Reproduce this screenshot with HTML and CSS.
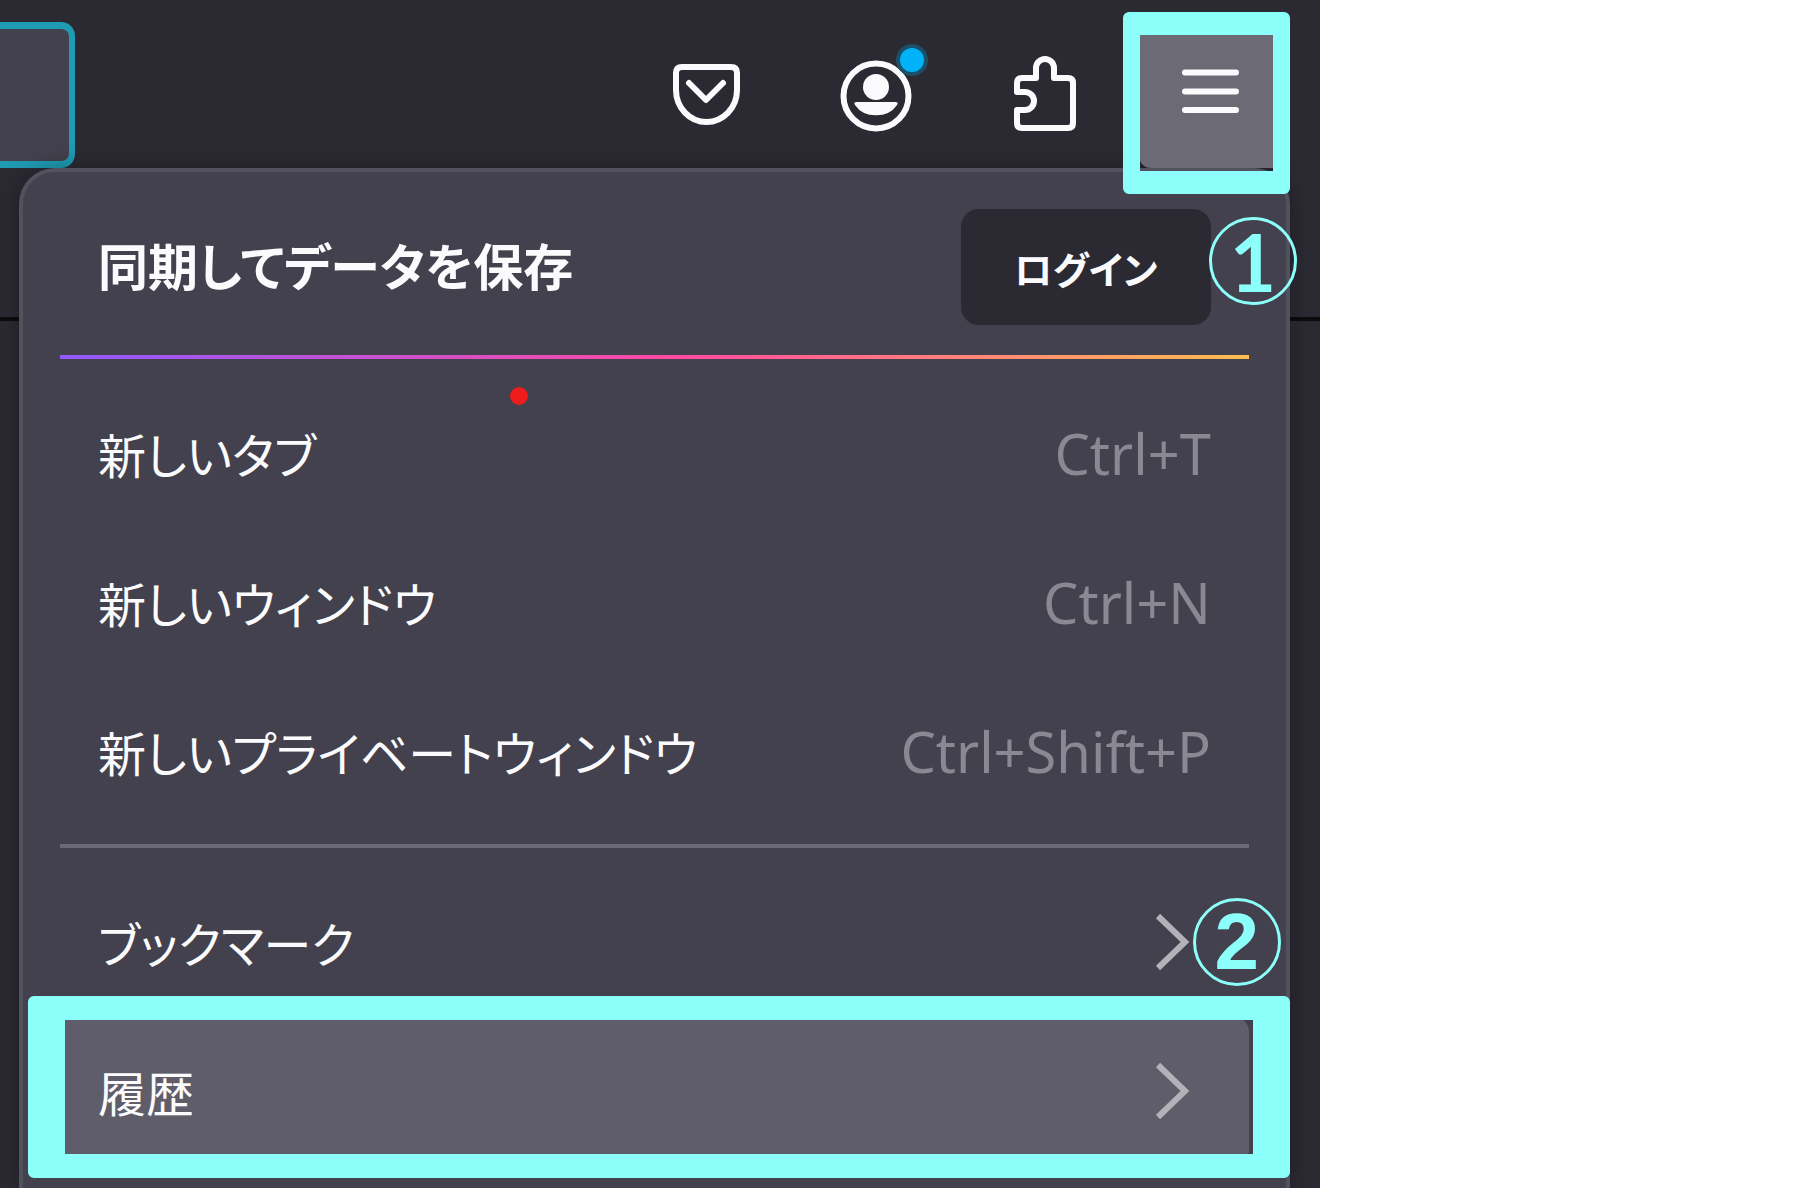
FILE: index.html
```html
<!DOCTYPE html>
<html lang="ja">
<head>
  <meta charset="UTF-8">
  <meta name="viewport" content="width=device-width, initial-scale=1">
  <title>Firefox メニュー</title>
  <link rel="stylesheet" href="styles.css">
</head>
<body>
  <div class="browser">
    <header class="toolbar">
      <input class="urlbar" type="text" aria-label="URL">
      <div class="tools">
        <button class="tool" aria-label="Pocket">
          <svg viewBox="0 0 80 80">
            <path d="M15 12h49q6 0 6 6v17a30.5 32 0 0 1-61 0V18q0-6 6-6z"/>
            <path d="M22 28l17 17 17-17"/>
          </svg>
        </button>
        <button class="tool" aria-label="アカウント">
          <svg viewBox="0 0 80 80">
            <circle cx="41" cy="41" r="32.5"/>
            <circle class="solid" cx="41" cy="32" r="13"/>
            <path class="solid" d="M22 47h38q4 0 2 3a24 20 0 0 1-42 0q-2-3 2-3z"/>
            <circle class="dot-glow" cx="77" cy="5" r="16"/>
            <circle class="dot" cx="77" cy="5" r="12"/>
          </svg>
        </button>
        <button class="tool" aria-label="拡張機能">
          <svg viewBox="0 0 80 80">
            <path d="M33 23V13a9 9 0 0 1 18 0v10h14q5 0 5 5v40q0 5-5 5H19q-5 0-5-5V55h8a9 9 0 0 0 0-18h-8v-9q0-5 5-5z"/>
          </svg>
        </button>
        <button class="tool open" aria-label="メニュー">
          <svg viewBox="0 0 80 80">
            <path d="M14 17.500h51M14 36.500h51M14 55h51"/>
          </svg>
          <span class="frame frame-tool"></span>
        </button>
      </div>
    </header>
    <div class="bookmarks-bar"></div>

    <nav class="panel">
      <div class="sync">
        <h2>同期してデータを保存</h2>
        <button class="login">ログイン</button>
      </div>
      <hr class="rainbow">
      <button class="item">新しいタブ <kbd>Ctrl+T</kbd></button>
      <button class="item">新しいウィンドウ <kbd>Ctrl+N</kbd></button>
      <button class="item">新しいプライベートウィンドウ <kbd>Ctrl+Shift+P</kbd></button>
      <hr>
      <button class="item">ブックマーク
        <svg class="chevron" viewBox="0 0 36 60"><path d="M3 4l27 26L3 56"/></svg>
      </button>
      <button class="item active">履歴
        <svg class="chevron" viewBox="0 0 36 60"><path d="M3 4l27 26L3 56"/></svg>
        <span class="frame frame-item"></span>
      </button>
      <span class="step step-one">1</span>
      <span class="step step-two">2</span>
      <span class="pointer"></span>
    </nav>
  </div>
</body>
</html>
```
FILE: styles.css
```css
* {
  box-sizing: border-box;
  margin: 0;
  padding: 0;
}
body {
  background: #fff;
  font-family: "Noto Sans", "Noto Sans CJK JP", sans-serif;
  color: #fbfbfe;
}
button {
  border: none;
  background: none;
  color: inherit;
  font-family: inherit;
}
.browser {
  position: relative;
  width: 73vw;
  height: 100vh;
  min-height: 1188px;
  background: #2b2a33;
  overflow: hidden;
}

/* toolbar */
.toolbar {
  display: flex;
  justify-content: space-between;
  padding: 22px 37px 0 0;
}
.urlbar {
  width: 75px;
  height: 146px;
  border: 7px solid #1f9bb3;
  border-left: none;
  border-right-width: 6px;
  border-radius: 0 14px 14px 0;
  background: #42414d;
  color: inherit;
}
.tools {
  display: flex;
  gap: 24px;
}
.tool {
  position: relative;
  display: flex;
  align-items: center;
  justify-content: center;
  width: 144px;
  height: 146px;
  border-radius: 12px;
}
.tool.open {
  z-index: 2;
  background: #6c6a74;
}
.tool svg {
  width: 80px;
  height: 80px;
  overflow: visible;
  fill: none;
  stroke: #fbfbfe;
  stroke-width: 6;
  stroke-linecap: round;
  stroke-linejoin: round;
}
.tool .solid {
  fill: #fbfbfe;
  stroke: none;
}
.tool .dot {
  fill: #00b3f9;
  stroke: none;
}
.tool .dot-glow {
  fill: #1c4f68;
  stroke: none;
}
.bookmarks-bar {
  height: 153px;
  border-bottom: 4px solid #0c0c0d;
}

/* menu panel */
.panel {
  position: absolute;
  top: 168px;
  left: 19px;
  right: 30px;
  bottom: 0;
  padding: 0 37px;
  border: 4px solid #52515e;
  border-bottom: none;
  border-radius: 36px 36px 0 0;
  background: #42414d;
  box-shadow: 0 0 24px rgba(0, 0, 0, 0.3);
}
.sync {
  display: flex;
  align-items: center;
  justify-content: space-between;
  padding: 37px 38px 30px;
}
.sync h2 {
  font-size: 50px;
  line-height: 60px;
  font-weight: 700;
  font-feature-settings: "palt";
}
.login {
  width: 250px;
  height: 116px;
  border-radius: 18px;
  background: #2b2a33;
  font-size: 38px;
  font-weight: 700;
  font-feature-settings: "palt";
}
hr {
  height: 4px;
  margin: 19px 0;
  border: none;
  background: #6a6975;
}
.rainbow {
  margin-top: 0;
  background: linear-gradient(90deg, #9059ff, #ff4aa2 52%, #ffbd4f);
}
.item {
  position: relative;
  display: flex;
  align-items: center;
  justify-content: space-between;
  width: 100%;
  height: 149px;
  padding: 0 38px;
  border-radius: 16px;
  font-size: 48px;
  text-align: left;
  font-feature-settings: "palt";
}
.item.active {
  background: #5f5d69;
}
.item kbd {
  font-family: "Noto Sans", sans-serif;
  font-size: 56px;
  color: #8a8993;
}
.chevron {
  width: 36px;
  height: 60px;
  margin-right: 20px;
  fill: none;
  stroke: #b3b2b9;
  stroke-width: 6;
}

/* highlights and step numbers */
.frame {
  position: absolute;
  border: solid #8dfffb;
  border-radius: 6px;
}
.frame-tool {
  top: -10px;
  left: -16px;
  width: 167px;
  height: 182px;
  border-width: 23px 17px;
}
.frame-item {
  top: -20px;
  left: -32px;
  right: -41px;
  height: 182px;
  border-width: 24px 37px;
}
.step {
  position: absolute;
  display: flex;
  align-items: center;
  justify-content: center;
  width: 88px;
  height: 88px;
  border: 3px solid #8dfffb;
  border-radius: 50%;
  color: #8dfffb;
  font-size: 80px;
  line-height: 80px;
  font-weight: 700;
}
.step-one {
  top: 45px;
  right: -11px;
  font-family: Lato, sans-serif;
}
.step-two {
  top: 726px;
  right: 5px;
  font-family: "Liberation Sans", sans-serif;
}
.pointer {
  position: absolute;
  top: 215px;
  left: 487px;
  width: 18px;
  height: 18px;
  border-radius: 50%;
  background: #ee1c1c;
}
```
